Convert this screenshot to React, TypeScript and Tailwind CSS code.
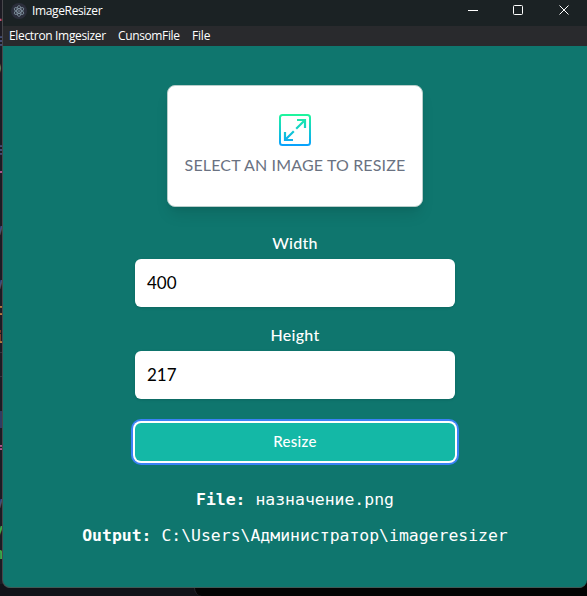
import React from "react";

const editorMarks = [
  { top: 9, text: "-", color: "text-[#b0558d]" },
  { top: 31, text: "≡", color: "text-[#434d75]" },
  { top: 58, text: ")", color: "text-[#5fa3b8]" },
  { top: 140, text: "≡", color: "text-[#434d75]" },
  { top: 165, text: "r", color: "text-[#b0558d]" },
  { top: 220, text: "v", color: "text-[#434d75]" },
  { top: 274, text: "v", color: "text-[#434d75]" },
  { top: 300, text: "t", color: "text-[#b27a3e]" },
  { top: 328, text: "i", color: "text-[#b27a3e]" },
  { top: 437, text: "=", color: "text-[#b0558d]" },
  { top: 493, text: "v", color: "text-[#434d75]" },
  { top: 520, text: "y", color: "text-[#3da648]" },
  { top: 544, text: "n", color: "text-[#3da648]" },
];

function EditorBehind() {
  return (
    <div className="absolute inset-0 bg-[#1c1b23]">
      {editorMarks.map((m) => (
        <span
          key={m.top}
          style={{ top: m.top }}
          className={`absolute -left-[6px] font-['DejaVu_Sans_Mono',monospace] text-base leading-5 font-bold ${m.color}`}
        >
          {m.text}
        </span>
      ))}
      <div className="absolute top-[352px] left-0 h-px w-[3px] bg-[#34343f]" />
      <div className="absolute top-[376px] left-0 h-px w-[3px] bg-[#34343f]" />
      <div className="absolute top-[411px] left-0 h-[17px] w-[3px] bg-[#303c62]" />
      <div className="absolute bottom-0 left-0 h-3 w-full bg-[#111218]" />
      <div className="absolute right-0 bottom-0 h-6 w-[393px] rounded-bl-lg border-l border-[#29292d] bg-[#030303]" />
    </div>
  );
}

function ElectronIcon() {
  return (
    <svg viewBox="0 0 16 16" className="size-4" fill="none">
      <circle cx="8" cy="8" r="8" fill="#2b2e3b" />
      <g stroke="#8fa3b0" strokeWidth=".7" transform="rotate(30 8 8)">
        <ellipse cx="8" cy="8" rx="5.4" ry="2.1" />
        <ellipse cx="8" cy="8" rx="5.4" ry="2.1" transform="rotate(60 8 8)" />
        <ellipse cx="8" cy="8" rx="5.4" ry="2.1" transform="rotate(120 8 8)" />
      </g>
      <circle cx="8" cy="8" r=".8" fill="#a1b5c2" />
    </svg>
  );
}

function TitleBar() {
  return (
    <div className="flex h-[26px] shrink-0 items-start bg-[#1b2224] pl-2 text-white">
      <div className="mt-[3px]">
        <ElectronIcon />
      </div>
      <span className="mt-[3px] ml-[5px] text-[12px] leading-4 tracking-[-0.36px]">ImageResizer</span>
      <svg viewBox="0 0 106 12" className="mt-1 mr-[16px] ml-auto h-3 w-[106px]" fill="none" stroke="white">
        <path d="M3 6.5h10" />
        <rect x="48.5" y="1.5" width="9" height="9" rx="1" />
        <path d="M94.5 1.5l9 9M103.5 1.5l-9 9" />
      </svg>
    </div>
  );
}

function ResizeIcon() {
  return (
    <svg viewBox="0 0 32 32" className="size-8" fill="none" stroke="url(#resize-gradient)" strokeWidth="2">
      <defs>
        <linearGradient id="resize-gradient" gradientUnits="userSpaceOnUse" x1="0" y1="0" x2="0" y2="32">
          <stop offset="0" stopColor="#20f79b" />
          <stop offset="1" stopColor="#08a0ff" />
        </linearGradient>
      </defs>
      <rect x="1" y="1" width="30" height="30" rx="2.5" />
      <path d="M18 6h8v8M25.5 6.5L17.2 14.8M6 18v8h8M6.5 25.5l8.3-8.3" strokeWidth="2.2" />
    </svg>
  );
}

function Field({ label, value }: { label: string; value: string }) {
  return (
    <div className="w-80">
      <label className="mb-1 block text-center text-base leading-6 font-medium tracking-[0.3px] text-white">
        {label}
      </label>
      <div className="flex h-12 items-center rounded-md bg-white px-3 pb-px text-[17px] text-black shadow-sm">
        {value}
      </div>
    </div>
  );
}

export default function App() {
  return (
    <div className="relative h-[596px] w-[587px] overflow-hidden font-['Open_Sans',sans-serif]">
      <EditorBehind />
      <div className="relative ml-[3px] flex h-[588px] flex-col overflow-hidden rounded-b-lg border-b border-[#3f5956] bg-[#0f766e] shadow-[-1px_0_0_#47474b]">
        <TitleBar />
        <div className="flex h-5 shrink-0 items-center gap-3 bg-[#292a2d] pl-[6px] text-[12px] leading-5 text-white">
          <span className="w-[97px] tracking-[-0.33px] whitespace-nowrap">Electron Imgesizer</span>
          <span className="w-[62px] tracking-[-0.37px] whitespace-nowrap">CunsomFile</span>
          <span className="tracking-[-0.2px]">File</span>
        </div>
        <main className="flex flex-col items-center font-[Lato,sans-serif]">
          <div className="mt-[39px] flex h-[122px] w-64 flex-col items-center rounded-lg border border-[#b8cecb] bg-white pt-7 shadow-lg">
            <ResizeIcon />
            <span className="mt-[7px] text-base leading-6 tracking-[0.15px] whitespace-nowrap text-gray-500">
              SELECT AN IMAGE TO RESIZE
            </span>
          </div>
          <div className="mt-6 flex flex-col gap-4">
            <Field label="Width" value="400" />
            <Field label="Height" value="217" />
          </div>
          <button className="mt-6 h-[38px] w-80 rounded-md bg-[#14b8a6] pb-px text-[15px] font-medium tracking-[0.3px] text-white ring-2 ring-[#3b82f6] ring-offset-2 ring-offset-white">
            Resize
          </button>
          <div className="mt-[25px] text-center font-['DejaVu_Sans_Mono',monospace] text-[16.44px] leading-7 whitespace-pre text-white">
            <p>
              <strong>File: </strong>назначение.png
            </p>
            <p className="mt-2">
              <strong>Output: </strong>C:\Users\Администратор\imageresizer
            </p>
          </div>
        </main>
      </div>
    </div>
  );
}
